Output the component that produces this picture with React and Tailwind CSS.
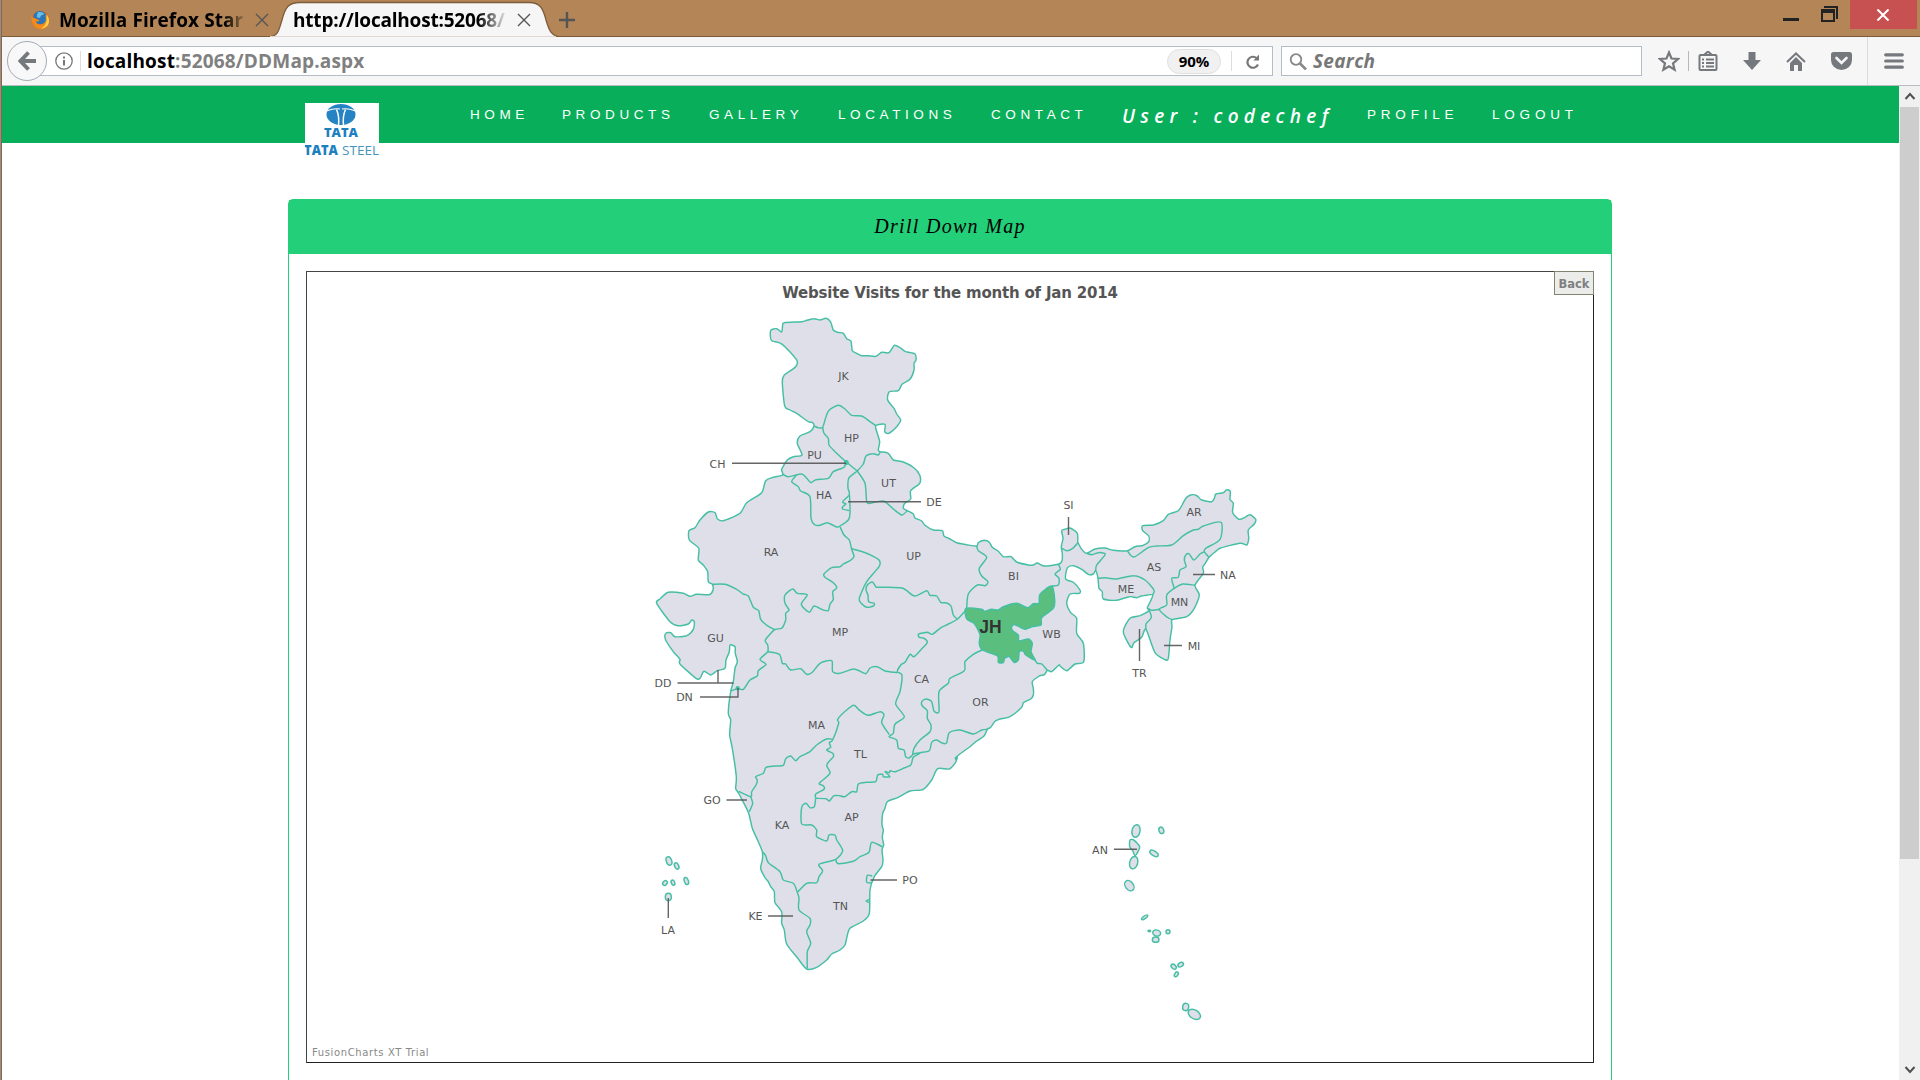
import React from "react";

// Boundary points are recorded on survey sheets: each sheet has an origin and three units per pixel.
const SHEETS = {
  A: [740, 300],
  C: [840, 500],
  D: [1060, 480],
  E: [640, 460],
  G: [700, 660],
  H: [840, 660],
  L: [640, 820],
  N: [1080, 800],
};

const pts = (sheet, text) =>
  text.trim().split(/\s+/).map((pair) => {
    const [x, y] = pair.split(",").map(Number);
    return [SHEETS[sheet][0] + x / 3, SHEETS[sheet][1] + y / 3];
  });

const f = (n) => n.toFixed(1);

// Rounded polyline through the points.
function curve(points, closed) {
  const n = points.length;
  const at = (i) => (closed ? points[(i + n) % n] : points[Math.max(0, Math.min(n - 1, i))]);
  let d = `M${f(points[0][0])} ${f(points[0][1])}`;
  const k = 0.13;
  for (let i = 0; i < (closed ? n : n - 1); i++) {
    const [a, b, c, e] = [at(i - 1), at(i), at(i + 1), at(i + 2)];
    d += `C${f(b[0] + (c[0] - a[0]) * k)} ${f(b[1] + (c[1] - a[1]) * k)} ${f(c[0] - (e[0] - b[0]) * k)} ${f(c[1] - (e[1] - b[1]) * k)} ${f(c[0])} ${f(c[1])}`;
  }
  return closed ? d + "Z" : d;
}

const OUTLINE = [
  ...pts("A", `93,90 110,86 125,96 128,75 133,68 185,65 200,61 222,56 240,60 258,55 272,66 280,90 293,97 310,100 320,116 333,124 337,152 350,160 365,167 385,167 408,169 425,157 447,158 463,136 480,143 497,155 525,162 528,180 522,190 522,210 510,238 487,252 475,272 448,275 443,300 462,325 470,342 482,360 470,380 446,400 434,395 435,373 407,377 412,400 419,425 415,450 421,455 445,460 460,480 490,486 520,502 539,525 539,550 512,572 512,597 494,610 490,625 502,632 520,642 525,654 545,663 555,676 580,690 607,692 612,708 632,718`),
  ...pts("C", `350,128 380,134 410,138 415,128 433,121 448,127 457,142 475,154 490,170 513,170 530,186 565,195 580,195 592,189 612,198 655,193 666,183 667,160 664,140 669,115 665,92 675,88 690,84 712,100 713,128`),
  ...pts("D", `54,188 65,208 80,220 105,207 135,204 160,211 202,212 225,200 250,196 266,185 266,168 248,152 248,137 280,135 310,122 325,103 355,92 370,68 380,52 395,44 412,48 425,60 455,65 463,55 468,42 490,38 500,29 511,34 510,58 520,70 518,98 537,118 555,112 570,104 587,118 583,132 565,150 566,175 560,195 540,190 482,204 465,216 447,232 436,250 428,262 430,280 405,316 418,345 403,385 380,410 337,419 336,440 330,480 325,535 315,539 285,518 258,448 245,472 222,488 213,502 190,455 210,415 240,407 268,391 262,383 278,345 245,348 230,353 208,350 170,361 130,357 127,335 117,325 114,295 107,272 100,282 85,283 65,268 40,257 22,264 17,297 40,307 60,330 58,340 30,342 20,370 32,398 50,415 50,460 70,490 71,545 45,552 20,572 0,558`),
  ...pts("C", `657,495 635,515 622,511 613,524 598,528 577,545 580,565 580,585 572,597 550,608 545,622 510,650 480,657 465,664 452,682 442,688 432,708 410,723 390,740`),
  ...pts("H", `350,290 348,305 328,327 293,326 275,360 250,388 210,393 175,412 142,425 135,445 128,460 126,495 130,510 127,532 131,555 126,570 129,600 125,620 103,650`),
  ...pts("G", `510,690 508,760 490,783 450,805 440,835 435,855 420,870 395,882 380,900 350,922 320,927 292,893 260,852 253,810 245,790 245,755 225,728 223,695 212,680 205,665 195,653 182,625 187,600 187,575 175,545 157,505 145,457 116,400 107,385 109,350 97,265 89,225 92,180 85,160 92,95`),
  ...pts("E", `280,665 285,625 292,605 286,580 285,560 270,555 268,575 258,600 255,625 232,632 212,645 192,634 180,655 168,655 120,612 120,598 100,575 77,540 77,520 92,518 105,530 140,527 160,508 163,485 155,480 145,492 115,497 90,485 50,430 60,417 85,397 130,400 150,409 170,403 208,404 219,390 217,373 205,365 203,335 190,315 175,300 176,265 148,240 147,212 165,203 180,180 205,156 225,158 232,176 250,182 300,160 320,128 365,98 377,62 400,52 428,45`),
  ...pts("A", `125,508 142,480 160,470 186,465 172,430 180,408 210,395 222,378 217,367 205,365 170,340 150,330 134,318 127,245 133,225 167,200 170,180 127,133 95,122 91,105`),
];

const JHARKHAND = pts("C", `378,325 425,328 433,334 455,328 475,330 490,320 530,310 563,323 580,311 597,310 600,283 635,258 644,300 640,325 605,353 603,375 575,380 555,388 525,374 515,380 518,392 535,405 537,422 565,417 577,430 573,455 585,480 557,465 550,453 538,455 535,480 522,487 508,470 494,475 490,488 475,487 472,467 427,450 418,430 420,403 402,370 380,357`);

const BORDERS = [
  pts("A", `222,378 235,383 248,382 258,350 268,330 295,316 315,327 335,346 365,348 390,365 407,377`),
  pts("A", `248,382 252,400 265,415 267,435 285,455 318,485 352,513`),
  pts("A", `352,513 370,492 378,468 400,461 415,465 421,455`),
  pts("A", `128,522 145,530 185,522 200,535 213,548 228,539 265,535 280,515 312,502 318,487`),
  pts("A", `170,524 155,545 175,560 182,573 210,590 213,655 225,675 240,676 262,668 290,681 300,678 325,660 330,640 328,580 324,565 326,535 352,513`),
  pts("A", `328,586 308,605 318,612 308,620 308,627 328,632`),
  pts("A", `352,513 375,550 380,605 390,610 430,603 460,627 485,645 502,632`),
  pts("E", `600,200 612,225 628,240 635,268 642,290 630,302 610,312 600,320 575,323 552,342 555,352 580,368 590,384 578,395 580,418 570,433 565,452 550,450 522,438 508,457 484,433 502,404 472,400 458,387 435,405 435,430 447,450 437,460 437,480 425,505 404,509 376,540 383,555 383,575 360,598 378,613 355,632 352,648 330,660 310,688 293,686 272,693`),
  pts("E", `217,373 255,373 290,388 310,402 325,408 340,442 356,452 362,478 382,497 404,509`),
  pts("E", `383,575 418,583 427,610 437,612 452,630 482,626 500,643 517,637 540,610 575,602 578,635 600,640 642,627 677,641 690,624 712,620 735,633 772,638`),
  pts("E", `635,266 660,273 685,282 717,300 717,320 680,365 658,415 664,430 680,442 700,438 703,430 686,425 684,405 678,390 682,375 697,366 708,382`),
  pts("C", `108,262 140,262 185,264 200,272 225,288 260,272 270,286 290,288 302,307 320,309 333,318 340,345 352,358`),
  pts("C", `380,328 352,358 325,372 300,385 277,403 262,397 236,402 238,412 250,414 262,427 242,450 222,470 210,463 195,487 183,494 172,515 186,525 180,575 167,612 193,650 165,672 160,700 147,710 170,720 175,745 192,750 197,770 207,774 218,765`),
  pts("C", `410,138 415,152 440,172 418,205 425,228 444,245 435,257 412,255 385,282 380,325`),
  pts("C", `655,193 661,208 645,222 657,235 655,255 635,258`),
  pts("C", `585,480 592,490 605,492 622,511`),
  pts("C", `427,450 400,463 375,485 373,512 330,535 325,550 297,575 297,635 282,633 275,605 258,597 245,605 247,618 262,632 262,655 273,675 270,695 240,720 222,745 218,765`),
  pts("C", `218,762 240,758 268,752 275,727 290,720 308,730 320,728 328,698 360,690 400,702 425,690 442,688`),
  pts("H", `240,280 220,292 212,315 190,325 165,335 150,332 148,338 135,335 150,350 130,350 128,343 113,345 107,365 80,367 55,372 50,395 35,395 15,410 0,407`),
  pts("G", `420,407 402,407 388,423 378,416 347,415`),
  pts("G", `347,415 347,402 372,388 370,377 358,370 390,340 380,315 400,290 398,280 380,270 392,262 388,248 398,240 416,190 413,178 440,150 462,136 480,152 505,166 540,155 552,165 545,188 568,224`),
  pts("G", `398,238 380,237 350,255 330,275 300,290 287,302 272,288 257,296 250,316 225,318 198,322 190,340 167,350 172,360 168,375 155,395 152,410 116,394`),
  pts("G", `152,410 158,430 148,455`),
  pts("G", `347,415 343,440 330,443 318,430 305,442 305,492 335,495 350,510 350,530 380,543 387,525 405,525 410,540 428,572 407,598 357,613 368,632 357,650 350,668 320,670 292,697`),
  pts("G", `407,598 415,611 460,604 480,590 507,577 515,547 547,560`),
  pts("G", `187,575 197,587 205,608 240,635 250,660 280,670 292,697 297,715 297,750 330,775 330,795 320,815 332,850 322,875 322,925`),
  pts("D", `5,205 20,212 38,205 54,188`),
  pts("D", `80,220 95,224 115,218 130,219 135,225 110,255 107,272`),
  pts("D", `202,212 212,226 225,230 265,203 290,198 335,195 370,167 400,150 415,148 430,138 483,127 480,178 437,205 433,215 447,232`),
  pts("D", `433,215 420,222 402,240 388,222 378,224 373,240 378,260 360,270 355,292 335,295 343,325`),
  pts("D", `405,316 368,312 343,325 320,345 320,375 298,388 322,412 337,419`),
  pts("D", `298,388 275,391 265,385`),
  pts("D", `114,295 135,293 170,297 220,287 255,300 282,330 278,345`),
  pts("D", `268,391 274,413 258,432 258,448`),
  pts("G", `517,648 502,646 500,667 514,668`),
  pts("G", `508,718 498,723 508,728`),
];

// sheet, centre x, centre y, radius x, radius y, rotation
const ISLANDS = [
  ["L", 87, 123, 8, 13, -20], ["L", 110, 138, 6, 10, -25], ["L", 75, 189, 6, 8, 40],
  ["L", 99, 188, 5, 8, -25], ["L", 139, 183, 6, 11, -20], ["L", 85, 231, 9, 11, 0],
  ["N", 168, 93, 12, 19, 12], ["N", 161, 188, 12, 19, 15], ["N", 244, 91, 7, 10, -20],
  ["N", 222, 160, 14, 7, 32], ["N", 148, 257, 12, 17, -38], ["N", 194, 352, 11, 4, -35],
  ["N", 208, 393, 4, 2, 0], ["N", 230, 399, 12, 9, 15], ["N", 227, 419, 10, 8, 0],
  ["N", 264, 395, 6, 6, 0], ["N", 281, 500, 9, 6, 40], ["N", 302, 494, 9, 6, -30],
  ["N", 289, 523, 5, 8, 30], ["N", 317, 621, 9, 11, 10], ["N", 343, 643, 20, 13, 32],
];
const ANDAMAN = pts("N", `150,120 160,119 170,128 179,140 174,155 165,167 158,152 149,140`);

const LABELS = [
  ["JK", 843.5, 380], ["HP", 851.5, 442], ["PU", 814.5, 459], ["CH", 717.5, 468], ["UT", 888.5, 487],
  ["HA", 824, 499], ["DE", 934, 506], ["RA", 771, 556], ["UP", 913.5, 560], ["MP", 840, 636],
  ["GU", 715.5, 642], ["DD", 663, 687], ["DN", 684.5, 701], ["CA", 921.5, 683], ["MA", 816.5, 729],
  ["OR", 980.5, 706], ["BI", 1013.5, 580], ["WB", 1051.5, 638], ["SI", 1068.5, 509], ["AR", 1194, 516],
  ["AS", 1154, 571], ["NA", 1228, 579], ["ME", 1126, 593], ["MN", 1179.5, 606], ["MI", 1194, 650],
  ["TR", 1139.5, 677], ["TL", 860.5, 758], ["AP", 851.5, 821], ["KA", 782, 829], ["GO", 712, 804],
  ["KE", 755.5, 920], ["TN", 840.5, 910], ["PO", 910, 884], ["LA", 668, 934], ["AN", 1100, 854],
];

const LEADERS =
  "M732 463.2H846M848 501.7H921M1068.5 517V535M1193 574.5H1215M1164 645.5H1182M1139.5 629V661M677.5 683H733.5M718 670V683M700 697H738V688M726.5 800H747M768 916H793M870.5 880H897M668.3 898V918M1114 849.3H1137";

function IndiaMap() {
  return (
    <svg className="block h-[730px] w-full" viewBox="307 310 1286 730">
      <g fill="#dfdfea" stroke="#45bfa3" strokeWidth="1.45" strokeLinejoin="round">
        <path d={curve(OUTLINE, true)} />
        {BORDERS.map((b, i) => (
          <path key={i} d={curve(b, false)} fill="none" />
        ))}
        <path d={curve(JHARKHAND, true)} fill="#5abf7e" />
        <path d={curve(ANDAMAN, true)} />
        {ISLANDS.map(([s, x, y, rx, ry, r], i) => {
          const cx = SHEETS[s][0] + x / 3;
          const cy = SHEETS[s][1] + y / 3;
          return <ellipse key={i} cx={cx} cy={cy} rx={rx / 3} ry={ry / 3} transform={`rotate(${r} ${cx} ${cy})`} />;
        })}
        <circle cx="846.3" cy="462.5" r="1.8" fill="#45bfa3" />
        <circle cx="737.7" cy="688.3" r="1.5" fill="#45bfa3" />
        <circle cx="956.3" cy="758.3" r="1" fill="#45bfa3" />
      </g>
      <path d={LEADERS} fill="none" stroke="#555" strokeOpacity="0.9" strokeWidth="1.4" />
      <g fill="#555" fontSize="11" textAnchor="middle" fontFamily="Verdana, 'DejaVu Sans', sans-serif">
        {LABELS.map(([t, x, y]) => (
          <text key={t} x={x} y={y}>{t}</text>
        ))}
      </g>
      <text x="990.5" y="632.700" textAnchor="middle" fill="#333" fontSize="17.500" fontWeight="700" fontFamily="'Liberation Sans', Arial, sans-serif">JH</text>
    </svg>
  );
}

function FirefoxLogo() {
  return (
    <svg className="h-5 w-[19px] shrink-0" viewBox="0 0 20 20">
      <circle cx="10" cy="10" r="9.5" fill="#e8661b" />
      <circle cx="9.5" cy="7.8" r="7.3" fill="#2c76b8" />
      <path d="M7 2c3-1 6 0 7 2l-3 1-2 3-3-1z" fill="#67bfe6" />
      <path d="M1 4c0 3 1 4 3 4 2 1 3 2 5 2-1 2-3 2-4 1 1 4 6 5 9 2 2-2 2-5 1-8 4 3 5 8 2 12-4 4-11 3-14-1C0 12 0 7 1 4z" fill="#f28a1c" />
      <path d="M16 4c3 3 4 7 2 11-2 3-5 4-8 4 5-2 8-7 6-15z" fill="#fbd04a" />
    </svg>
  );
}

function CloseGlyph() {
  return (
    <svg className="h-[14px] w-[14px] shrink-0" viewBox="0 0 14 14" stroke="#555" strokeWidth="1.4">
      <path d="M1 1l12 12M13 1L1 13" />
    </svg>
  );
}

function TabStrip() {
  return (
    <div className="flex h-[37px] items-start bg-[#b48556]">
      <div className="flex h-[37px] w-[278px] items-center border-b border-[#7d5c3b] pt-1 pl-[29px]">
        <FirefoxLogo />
        <span className="ml-[9px] w-[188px] text-[19px] font-bold tracking-[0.08px] whitespace-nowrap text-black [mask-image:linear-gradient(to_right,#000_88%,transparent)]">Mozilla Firefox Star</span>
        <span className="ml-[8px]"><CloseGlyph /></span>
      </div>
      <div className="grid h-[37px] w-[276px] grid-cols-1">
        <svg className="col-start-1 row-start-1 -ml-[10px] h-[37px] w-[290px]" viewBox="0 0 290 37">
          <path d="M0 37C8 36 9 30 12 20C15 8 18 2.500 30 2.500H259C270 2.500 273 8 276 20C279 30 281 36 290 37Z" fill="#f6f6f6" stroke="#7d5c3b" strokeWidth="1.300" />
          <path d="M0 37H290" stroke="#f6f6f6" strokeWidth="1.500" />
        </svg>
        <div className="z-10 col-start-1 row-start-1 flex items-center pt-[3px] pl-[13px]">
          <span className="w-[215px] text-[19px] font-bold tracking-[-0.2px] whitespace-nowrap text-black [mask-image:linear-gradient(to_right,#000_86%,transparent)]">http://localhost:52068/</span>
          <span className="ml-[9px]"><CloseGlyph /></span>
        </div>
      </div>
      <div className="flex h-[37px] flex-1 items-start justify-end border-b border-[#7d5c3b]">
        <svg className="mt-3 mr-auto h-4 w-4 translate-x-[3px]" viewBox="0 0 16 16" stroke="#555" strokeWidth="2.400">
          <path d="M8 0v16M0 8h16" />
        </svg>
        <svg className="mt-[5px] mr-[11px] h-[18px] w-[56px]" viewBox="0 0 56 18">
          <path d="M0 13h16v3H0z" fill="#222" />
          <path d="M41 1h14v13h-2V3H41zM38 4h14v13H38zM40 8v7h10V8z" fill="#222" fillRule="evenodd" />
        </svg>
        <div className="mr-[3px] flex h-[29px] w-[67px] items-center justify-center bg-[#c75050]">
          <svg className="h-[12px] w-[14px] -translate-x-px" viewBox="0 0 14 13" stroke="#fff" strokeWidth="2.200">
            <path d="M1 .5l12 12M13 .5l-12 12" />
          </svg>
        </div>
      </div>
    </div>
  );
}

function Toolbar() {
  return (
    <div className="flex h-[49px] items-center border-b border-[#b9bdc2] bg-[#f6f6f6] pl-[5px]">
      <div className="z-10 flex h-[40px] w-[40px] shrink-0 items-center justify-center rounded-full border border-[#a2abb8] bg-[#f8f8f8]">
        <svg className="h-5 w-5" viewBox="0 0 20 20" fill="none" stroke="#75787c" strokeWidth="4">
          <path d="M11.500 1.500L3.500 10l8 8.500M4 10h15" />
        </svg>
      </div>
      <div className="-ml-[8px] flex h-[30px] w-[1234px] shrink-0 items-center border border-[#b4bcc8] bg-white pl-[15px]">
        <svg className="h-[18px] w-[18px]" viewBox="0 0 18 18" fill="none" stroke="#777">
          <circle cx="9" cy="9" r="8.200" strokeWidth="1.300" />
          <path d="M9 8v5.500M9 4.500v2" strokeWidth="2" />
        </svg>
        <span className="ml-[7px] h-[20px] w-px bg-[#ddd]" />
        <span className="mt-px ml-[6px] text-[19px] font-bold tracking-[0.17px] text-[#808080]"><span className="text-black">localhost</span>:52068/DDMap.aspx</span>
        <span className="ml-auto flex h-[25px] w-[54px] items-center justify-center rounded-full border border-[#e0e0e0] bg-[#f1f1f1] pt-px text-[15px] font-bold text-black">90%</span>
        <span className="ml-[10px] h-[20px] w-px bg-[#ddd]" />
        <svg className="mr-[12px] ml-[14px] h-[15px] w-[14px]" viewBox="0 0 14 15" fill="none" stroke="#777" strokeWidth="2.200">
          <path d="M12 10.500A5.500 5.500 0 1 1 10.500 4" />
          <path d="M13 .5v6H7.500z" fill="#777" stroke="none" />
        </svg>
      </div>
      <div className="ml-[8px] flex h-[30px] w-[361px] shrink-0 items-center border border-[#b4bcc8] bg-white pl-[7px]">
        <svg className="h-[17px] w-[18px]" viewBox="0 0 18 17" fill="none" stroke="#888">
          <circle cx="7" cy="6.500" r="5.300" strokeWidth="1.800" />
          <path d="M11 10.500l6 6" strokeWidth="2.600" />
        </svg>
        <span className="mt-px ml-[6px] text-[19px] font-bold tracking-[0.3px] text-[#777] italic">Search</span>
      </div>
      <svg className="ml-[16px] h-[22px] w-[22px]" viewBox="0 0 22 22" fill="none" stroke="#75787c" strokeWidth="2.200">
        <path d="M11 2.500l2.500 6 6.500.5-5 4.300 1.600 6.300L11 16.200l-5.600 3.400L7 13.300 2 9l6.500-.5z" />
      </svg>
      <span className="ml-[8px] h-[20px] w-px bg-[#b8b8b8]" />
      <svg className="ml-[9px] h-[20px] w-[20px]" viewBox="0 0 20 20" fill="none" stroke="#75787c" strokeWidth="2">
        <rect x="1.500" y="4" width="17" height="15" rx="1" />
        <path d="M6 4l4-3.500L14 4zM4 8.500h2M8 8.500h8M4 12h2M8 12h8M4 15.500h2M8 15.500h8" />
      </svg>
      <svg className="ml-[25px] h-[18px] w-[18px]" viewBox="0 0 18 18" fill="#75787c">
        <path d="M5.500 0h7v8H18l-9 10L0 8h5.500z" />
      </svg>
      <svg className="ml-[25px] h-[19px] w-[20px]" viewBox="0 0 20 19" fill="none" stroke="#75787c">
        <path d="M1 10L10 1.500 19 10" strokeWidth="2" />
        <path d="M4 11l6-6 6 6v8h-4v-6H8v6H4z" fill="#75787c" stroke="none" />
      </svg>
      <svg className="ml-[25px] h-[18px] w-[21px]" viewBox="0 0 21 18">
        <path d="M2.500 0h16Q21 0 21 2.500V8a10.500 10 0 0 1-21 0V2.500Q0 0 2.500 0z" fill="#75787c" />
        <path d="M5.500 6l5 5 5-5" fill="none" stroke="#f6f6f6" strokeWidth="2.600" strokeLinecap="round" />
      </svg>
      <span className="ml-[15px] h-full w-px bg-[#dcdcdc]" />
      <svg className="ml-[16px] h-[16px] w-[20px]" viewBox="0 0 20 16" stroke="#75787c" strokeWidth="3.200" strokeLinecap="round">
        <path d="M1.700 1.800h16.600M1.700 8h16.600M1.700 14.200h16.600" />
      </svg>
    </div>
  );
}

function TataLogo() {
  return (
    <svg className="h-[59px] w-[74px] bg-white" viewBox="0 0 74 59">
      <ellipse cx="36" cy="11.500" rx="14.500" ry="10.500" fill="#2583c4" />
      <path d="M21.500 8Q29 5 35 6M50.500 8Q43 5 37 6" fill="none" stroke="#fff" strokeWidth="1.200" />
      <path d="M31.500 6.500Q34.500 13 33.500 22.500M40.500 6.500Q37.500 13 38.500 22.500" fill="none" stroke="#fff" strokeWidth="1.500" />
      <text x="36" y="34" textAnchor="middle" textLength="34" lengthAdjust="spacingAndGlyphs" fill="#1b7fc0" fontSize="13" fontWeight="800" fontFamily="'Open Sans'">TATA</text>
      <text x="-1" y="52" textLength="34" lengthAdjust="spacingAndGlyphs" fill="#1b7fc0" fontSize="13.500" fontWeight="800" fontFamily="'Open Sans'">TATA</text>
      <text x="37" y="52" textLength="37" lengthAdjust="spacingAndGlyphs" fill="#4795ba" fontSize="13.500" fontFamily="'Open Sans'">STEEL</text>
    </svg>
  );
}

function NavBar() {
  return (
    <header className="flex h-[57px] items-start bg-[#09ae5a] pt-[17px] pl-[303px]">
      <TataLogo />
      <nav className="ml-[91px] flex h-[24px] items-center font-['Liberation_Sans',Arial,sans-serif] text-[13.5px] tracking-[4.6px] whitespace-nowrap text-white">
        <a className="w-[92px]">HOME</a>
        <a className="w-[147px]">PRODUCTS</a>
        <a className="w-[129px]">GALLERY</a>
        <a className="w-[153px]">LOCATIONS</a>
        <a className="w-[131px]">CONTACT</a>
        <a className="w-[245px] pt-[2px] font-['Open_Sans','Noto_Sans',sans-serif] text-[19px] font-semibold tracking-[5.3px] italic">User : codechef</a>
        <a className="w-[125px] tracking-[4.800px]">PROFILE</a>
        <a className="tracking-[4.800px]">LOGOUT</a>
      </nav>
    </header>
  );
}

function ScrollBar() {
  return (
    <div className="flex w-[21px] flex-col items-center justify-between bg-[#f0f0f0]">
      <div className="flex w-full flex-col items-center">
        <svg className="h-[21px] w-[12px]" viewBox="0 0 12 21" fill="none" stroke="#505050" strokeWidth="2">
          <path d="M1.500 13L6 8l4.500 5" />
        </svg>
        <div className="h-[752px] w-[19px] bg-[#cdcdcd]" />
      </div>
      <svg className="h-[21px] w-[12px]" viewBox="0 0 12 21" fill="none" stroke="#505050" strokeWidth="2">
        <path d="M1.500 8L6 13l4.500-5" />
      </svg>
    </div>
  );
}

function MapPanel() {
  return (
    <section className="mt-[56px] ml-[286px] h-[900px] w-[1324px] rounded-t-[5px] border border-[#23cf78]">
      <h1 className="flex h-[54px] items-center justify-center bg-[#23cf78] pb-[3px] font-['Monotype_Corsiva','Liberation_Serif',serif] text-[20px] tracking-[1.3px] text-black italic">Drill Down Map</h1>
      <div className="relative mt-[17px] ml-[17px] flex h-[792px] w-[1288px] flex-col border border-[#444] border-r-[#222] border-b-[#222] bg-white font-[Verdana,'DejaVu_Sans',sans-serif]">
        <h2 className="flex h-[38px] items-center justify-center pt-1 text-[15px] font-bold tracking-[-0.19px] text-[#555]">Website Visits for the month of Jan 2014</h2>
        <IndiaMap />
        <p className="pt-[5px] pl-[5px] text-[10px] leading-[16px] tracking-[0.62px] text-[#888]">FusionCharts XT Trial</p>
        <button className="absolute -top-px -right-px h-[24px] w-[40px] border border-[#808570] bg-[#ecedeb] pt-[2px] text-[11.5px] leading-[20px] font-bold text-[#808080]">Back</button>
      </div>
    </section>
  );
}

export default function App() {
  return (
    <div className="flex h-[1080px] w-[1920px] overflow-hidden bg-white font-['Segoe_UI','Open_Sans','Noto_Sans',sans-serif]">
      <div className="w-px bg-[#a08a78]" />
      <div className="w-px bg-[#7f6a58]" />
      <div className="flex min-w-0 flex-1 flex-col">
        <TabStrip />
        <Toolbar />
        <div className="flex min-h-0 flex-1">
          <main className="min-w-0 flex-1 overflow-hidden">
            <NavBar />
            <MapPanel />
          </main>
          <ScrollBar />
        </div>
      </div>
    </div>
  );
}
